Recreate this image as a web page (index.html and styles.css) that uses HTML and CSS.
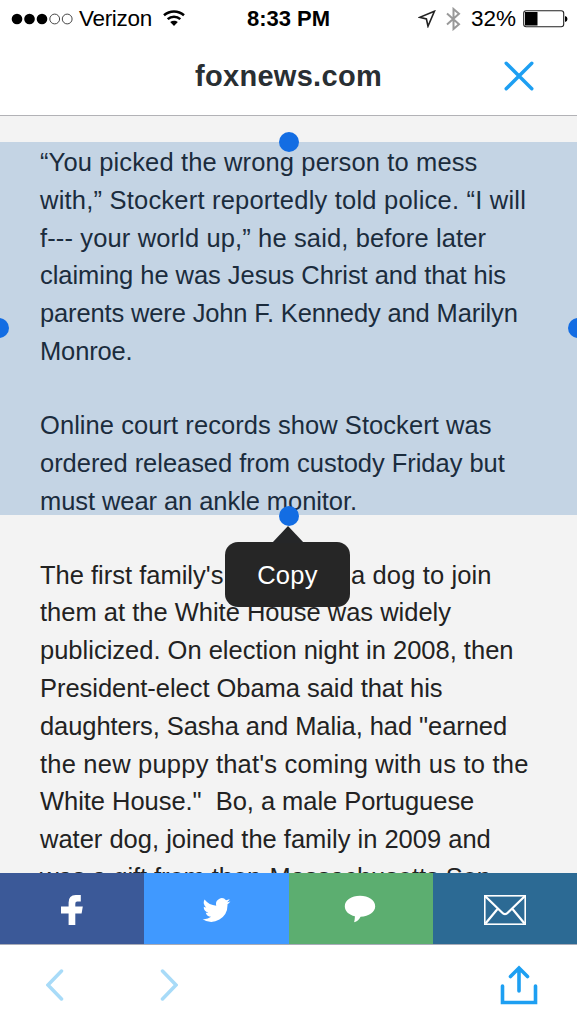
FILE: index.html
```
<!DOCTYPE html>
<html lang="en">
<head>
<meta charset="utf-8">
<title>foxnews.com</title>
<link rel="stylesheet" href="styles.css">
</head>
<body>
<div class="screen">
  <header class="top">
    <div class="status">
      <div class="carrier">
        <svg class="signal" width="62" height="12" viewBox="0 0 62 12"><g fill="#000"><circle cx="6" cy="6" r="5.3"/><circle cx="18.5" cy="6" r="5.3"/><circle cx="31" cy="6" r="5.3"/></g><g fill="none" stroke="#333" stroke-width=".9"><circle cx="43.7" cy="6" r="4.9"/><circle cx="56.2" cy="6" r="4.9"/></g></svg>
        <span class="network">Verizon</span>
        <svg class="wifi" width="22" height="17" viewBox="0 0 22 17"><g fill="none" stroke="#000" stroke-width="2.5"><path d="M1 5.3C6.8.1 15.2.1 21 5.3"/><path d="M4.7 9.2C8.3 5.9 13.7 5.9 17.3 9.2"/></g><path d="M7.2 12C9.4 10.2 12.6 10.2 14.8 12L11 16Z"/></svg>
      </div>
      <span class="clock">8:33 PM</span>
      <div class="indicators">
        <svg class="location" width="18" height="18" viewBox="0 0 18 18"><path d="M16.4 1.3 1.8 7.3 8.4 9 10 16.200Z" fill="none" stroke="#222" stroke-width="1.6"/></svg>
        <svg class="bluetooth" width="15" height="24" viewBox="0 0 15 24"><path d="M1 6.6 13 17.2 7.5 22V2L13 6.8 1 17.4" fill="none" stroke="#999" stroke-width="2"/></svg>
        <span class="percent">32%</span>
        <svg class="battery" width="45" height="18" viewBox="0 0 45 18"><rect x=".7" y=".7" width="40" height="16" rx="2.5" fill="none" stroke="#222" stroke-width="1.1"/><path d="M2 2H14.5V15.5H2ZM42 6Q44.5 6.5 44.5 9T42 12Z"/></svg>
      </div>
    </div>
    <div class="titlebar">
      <h1 class="title">foxnews.com</h1>
      <svg class="close" width="30" height="30" viewBox="0 0 30 30"><path d="M2.2 2.2 27.8 27.8M27.8 2.2 2.2 27.8" fill="none" stroke="#1d9ff2" stroke-width="3.4" stroke-linecap="round"/></svg>
    </div>
  </header>
  <main class="article">
    <div class="selection">
      <p>
        <span class="line open">“You picked the wrong person to mess</span>
        <span class="line wide">with,” Stockert reportedly told police. “I will</span>
        <span class="line open">f--- your world up,” he said, before later</span>
        <span class="line snug">claiming he was Jesus Christ and that his</span>
        <span class="line tight">parents were John F. Kennedy and Marilyn</span>
        <span class="line tight">Monroe.</span>
      </p>
      <p>
        <span class="line loose">Online court records show Stockert was</span>
        <span class="line snug">ordered released from custody Friday but</span>
        <span class="line close-set">must wear an ankle monitor.</span>
      </p>
      <i class="handle handle-top"></i>
      <i class="handle handle-left"></i>
      <i class="handle handle-right"></i>
      <i class="handle handle-bottom"></i>
      <div class="menu"><svg class="arrow" width="32" height="17" viewBox="0 0 32 17"><path d="M0 17 16 0 32 17Z" fill="#252628"/></svg>Copy</div>
    </div>
    <div class="story">
      <p>
        <span class="line split"><span>The first family's</span><span class="open">a dog to join</span></span>
        <span class="line">them at the White House was widely</span>
        <span class="line">publicized. On election night in 2008, then</span>
        <span class="line snug">President-elect Obama said that his</span>
        <span class="line close-set">daughters, Sasha and Malia, had "earned</span>
        <span class="line wide">the new puppy that's coming with us to the</span>
        <span class="line snug">White House."&nbsp; Bo, a male Portuguese</span>
        <span class="line">water dog, joined the family in 2009 and</span>
        <span class="line close-set">was a gift from then-Massachusetts Sen.</span>
      </p>
    </div>
  </main>
  <nav class="share">
    <a class="facebook"><svg width="24" height="32" viewBox="0 0 24 32"><path d="M8.6 31V19.6H1V12.5H8.6V8.5Q8.6 1 15.7 1H20.8V7.5H17.2Q15.3 7.5 15.3 9.7V12.5H22.8L21.6 19.6H15.3V31Z" fill="#fff"/></svg></a>
    <a class="twitter"><svg width="29" height="30" viewBox="0 0 24 24" preserveAspectRatio="none"><path d="M23.5 4.9a9.6 9.6 0 0 1-2.7.8 4.7 4.7 0 0 0 2.1-2.6 9.5 9.5 0 0 1-3 1.1A4.7 4.7 0 0 0 11.800 8.500 13.400 13.400 0 0 1 2.100 3.600 4.700 4.700 0 0 0 3.500 9.900 4.700 4.700 0 0 1 1.400 9.300 4.700 4.700 0 0 0 5.200 14 4.700 4.700 0 0 1 3.100 14.100 4.700 4.700 0 0 0 7.500 17.400 9.500 9.500 0 0 1 .5 19.300 13.400 13.400 0 0 0 21.100 7.400 9.600 9.600 0 0 0 23.500 4.900Z" fill="#fff"/></svg></a>
    <a class="comment"><svg width="32" height="28" viewBox="0 0 32 28"><path d="M16 .8C7.5.8.8 5.2.8 11.3c0 5 4.2 8.7 10.1 10-.1 2.100-.2 3.800-.8 5.900 3-.8 5.400-2.900 6.500-5.500C25 21.500 31.200 17.200 31.200 11.300 31.200 5.200 24.500.8 16 .8Z" fill="#fff"/></svg></a>
    <a class="mail"><svg width="42" height="30" viewBox="0 0 42 30"><g fill="none" stroke="#fff" stroke-width="1.6"><rect x=".8" y=".8" width="40.4" height="28.4"/><path d="M1 1 18 17.500Q21 20.700 24 17.500L41 1M1.500 28.500 13.500 14M40.500 28.500 28.500 14" stroke-width="2.2"/></g></svg></a>
  </nav>
  <footer class="toolbar">
    <svg class="back" width="18" height="32" viewBox="0 0 18 32"><path d="M15.5 2 2 16 15.5 30"/></svg>
    <svg class="forward" width="18" height="32" viewBox="0 0 18 32"><path d="M2.5 2 16 16 2.5 30"/></svg>
    <svg class="action" width="38" height="40" viewBox="0 0 38 40"><path d="M2.500 21V37.500H35.500V21M19 26V3M10.500 11.500 19 3 27.500 11.500" fill="none" stroke="#1d9ff2" stroke-width="3.600" stroke-linecap="round"/></svg>
  </footer>
</div>
</body>
</html>
```
FILE: styles.css
```
* { box-sizing: border-box; }
body { margin: 0; font-family: "Liberation Sans", Arial, sans-serif; background: #fff; }
svg { display: block; flex: none; }
.screen { width: 577px; height: 1024px; display: flex; flex-direction: column; overflow: hidden; }
.top { flex: none; height: 116px; background: #fff; border-bottom: 1px solid #b2b2b6; }
.status { height: 37px; display: grid; grid-template-columns: 1fr auto 1fr; align-items: center; font-size: 22.5px; }
.carrier { display: flex; align-items: center; padding-left: 11px; }
.network { width: 73px; margin-left: 6px; letter-spacing: -.3px; }
.wifi { margin-left: 11px; }
.clock { font-weight: bold; font-size: 22px; }
.indicators { display: flex; align-items: center; justify-content: flex-end; padding-right: 9px; }
.bluetooth { margin-left: 10px; }
.percent { margin: 0 7px 0 10px; }
.titlebar { height: 78px; display: grid; grid-template-columns: 1fr auto 1fr; align-items: center; }
.title { grid-column: 2; margin: 0; font-size: 29px; line-height: 36px; color: #292f33; letter-spacing: .3px; }
.close { justify-self: end; margin-right: 43px; }
.article { flex: none; height: 757px; padding-top: 26px; background: #f3f3f3; overflow: hidden; font-size: 25.5px; line-height: 37.8px; color: #222; white-space: nowrap; }
.article p { margin: 0; padding-left: 40px; }
.article p + p { margin-top: 36.4px; }
.line { display: block; }
.wide { letter-spacing: .21px; }
.open { letter-spacing: .13px; }
.loose { letter-spacing: .06px; }
.snug { letter-spacing: -.04px; }
.close-set { letter-spacing: -.07px; }
.tight { letter-spacing: -.14px; }
.split { display: grid; grid-template-columns: 311px auto; justify-content: start; }
.selection { position: relative; height: 373px; padding-top: 2px; background: #c4d4e4; color: #1b2c3d; }
.handle { position: absolute; width: 20px; height: 20px; border-radius: 50%; background: #136de3; }
.handle-top { left: 279px; top: -10px; }
.handle-left { left: -11px; top: 176px; }
.handle-right { right: -11px; top: 176px; }
.handle-bottom { left: 279px; top: 364px; }
.menu { position: absolute; left: 225px; top: 400px; width: 125px; height: 65px; border-radius: 13px; background: #262626; color: #fff; text-align: center; line-height: 67px; font-size: 25.5px; letter-spacing: .3px; }
.arrow { position: absolute; left: 47px; top: -16px; }
.story { padding-top: 41.6px; }
.share { flex: none; height: 72px; display: grid; grid-template-columns: 144px 145px 144px 144px; border-bottom: 1px solid #a9acb8; }
.share a { display: flex; align-items: center; justify-content: center; padding-top: 2px; }
.facebook { background: #3b5998; }
.twitter { background: #4099ff; }
.share .comment { background: #5cae70; padding: 0 2px 0 0; }
.mail { background: #2c6a94; }
.toolbar { flex: 1; display: flex; align-items: center; padding: 0 39px 0 46px; background: #fff; }
.back, .forward { fill: none; stroke: #a8dbf8; stroke-width: 3.5px; stroke-linecap: round; }
.forward { margin-left: 96px; }
.action { margin-left: auto; }
```
